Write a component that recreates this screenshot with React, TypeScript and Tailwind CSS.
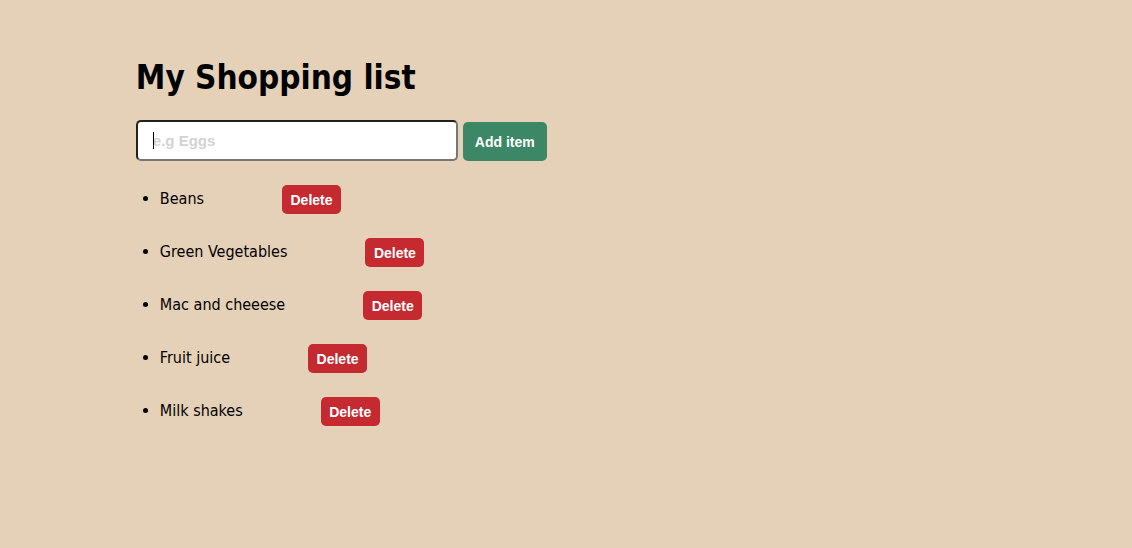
import { useState } from "react";
import type { FormEvent } from "react";

const initialItems = ["Beans", "Green Vegetables", "Mac and cheeese", "Fruit juice", "Milk shakes"];

export default function App() {
  const [items, setItems] = useState<string[]>(initialItems);
  const [draft, setDraft] = useState("");

  const addItem = (event: FormEvent) => {
    event.preventDefault();
    if (!draft.trim()) return;
    setItems([...items, draft.trim()]);
    setDraft("");
  };

  return (
    <main className="min-h-screen bg-[#e5d1b8] px-[12%] pt-14 pb-12 font-['DejaVu_Sans_Condensed','DejaVu_Sans',sans-serif] text-base text-black">
      <h1 className="text-[33px] leading-11 font-bold">My Shopping list</h1>

      <form onSubmit={addItem} className="mt-5 flex items-end gap-[5px]">
        <div className="relative w-[322px]">
          <input
            type="text"
            aria-label="New item"
            placeholder="e.g Eggs"
            value={draft}
            onChange={(event) => setDraft(event.target.value)}
            className="block h-[41px] w-full rounded-[5px] border-2 border-t-[#212121] border-r-[#767676] border-b-[#767676] border-l-[#212121] bg-white px-[15px] font-['Liberation_Sans',Arial,sans-serif] text-[15px] font-bold outline-none placeholder:text-[#d3d3d3]"
          />
          {draft === "" && (
            <span aria-hidden="true" className="pointer-events-none absolute top-3 left-[17px] h-[17px] w-px bg-black" />
          )}
        </div>
        <button
          type="submit"
          className="h-[39px] rounded-[5px] bg-[#3c8765] px-3 font-['Liberation_Sans',Arial,sans-serif] text-sm font-bold text-white"
        >
          Add item
        </button>
      </form>

      <ul className="mt-6 flex list-disc flex-col gap-6 pl-6">
        {items.map((item, index) => (
          <li key={`${item}-${index}`} className="h-[29px] leading-7">
            <div className="flex h-[29px] items-start gap-[78px]">
              <span>{item}</span>
              <button
                type="button"
                aria-label={`Delete ${item}`}
                onClick={() => setItems(items.filter((_, i) => i !== index))}
                className="h-[29px] min-w-[59px] rounded-[5px] bg-[#c42a30] px-2 font-['Liberation_Sans',Arial,sans-serif] text-sm leading-5 font-bold text-white"
              >
                Delete
              </button>
            </div>
          </li>
        ))}
      </ul>
    </main>
  );
}
